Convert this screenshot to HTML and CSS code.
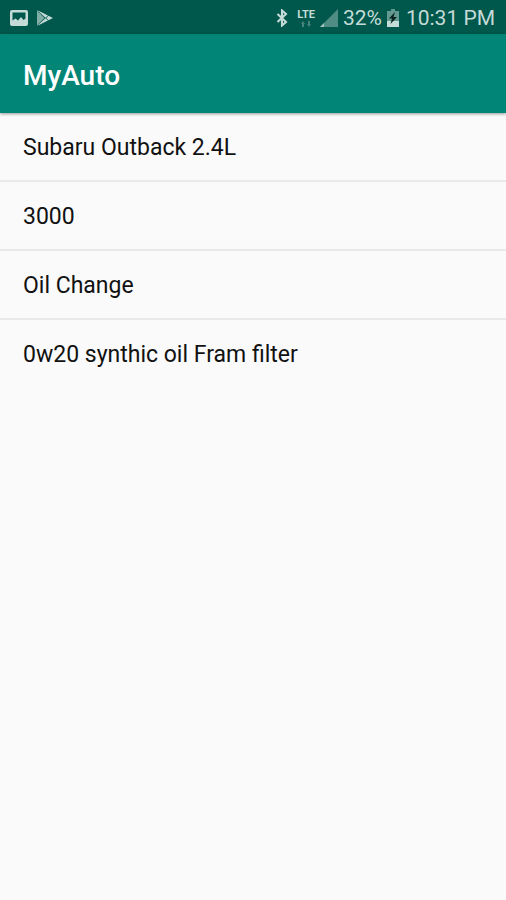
FILE: index.html
```html
<!DOCTYPE html>
<html lang="en">
<head>
<meta charset="utf-8">
<meta name="viewport" content="width=device-width, initial-scale=1">
<title>MyAuto</title>
<link rel="stylesheet" href="styles.css">
</head>
<body>
<div class="status">
  <div class="notifications">
    <svg width="18" height="16" viewBox="0 0 18 16" aria-hidden="true"><path fill="currentColor" fill-rule="evenodd" d="M2 0h14q2 0 2 2v12q0 2-2 2H2q-2 0-2-2V2q0-2 2-2zM2.500 2.500v8l3-2 2.500 2 3-3.500 2.500 3 2-1.500v-6z"/></svg>
    <svg width="16" height="16" viewBox="0 0 16 16" aria-hidden="true"><path fill="currentColor" d="M0 .5v15L7.500 8z" opacity=".65"/><path fill="currentColor" d="M0 0l11 5.500-2.500 2.200zM0 16l11-5.500-2.500-2.200zM11.500 5.800L16 8l-4.500 2.200L9.300 8z"/></svg>
  </div>
  <div class="indicators">
    <svg width="12" height="18" viewBox="0 0 12 18" aria-hidden="true"><path fill="none" stroke="currentColor" stroke-width="2.100" d="M1.500 5l8.500 8-4 3.500v-15L10 5l-8.500 8"/></svg>
    <div class="network">
      <span class="lte">LTE</span>
      <svg width="10" height="6" viewBox="0 0 10 6" aria-hidden="true"><path fill="currentColor" opacity=".35" d="M0 3l2-3 2 3H3v3H1V3zM7 0h2v3h1L8 6 6 3h1z"/></svg>
    </div>
    <svg width="18" height="18" viewBox="0 0 18 18" aria-hidden="true"><path fill="currentColor" opacity=".4" d="M18 0v18H0z"/><path fill="currentColor" opacity=".7" d="M4 14v4H0z"/></svg>
    <span>32%</span>
    <svg width="12" height="18" viewBox="0 0 12 18" aria-hidden="true"><path fill="currentColor" opacity=".5" d="M4 0h4v2h4v16H0V2h4z"/><path fill="currentColor" d="M0 12h12v6H0z"/><path fill="#06231f" d="M8 3L2 9.500h3L3.500 15 10 8H6.500z"/></svg>
    <time class="clock">10:31 PM</time>
  </div>
</div>
<header class="appbar"><h1>MyAuto</h1></header>
<main>
  <ul class="list">
    <li>Subaru Outback 2.4L</li>
    <li>3000</li>
    <li>Oil Change</li>
    <li>0w20 synthic oil Fram filter</li>
  </ul>
</main>
</body>
</html>
```
FILE: styles.css
```css
* { box-sizing: border-box; }

body {
  margin: 0;
  min-height: 100vh;
  background: #fafafa;
  color: #111;
  font-family: Roboto, "Liberation Sans", sans-serif;
}

svg { display: block; flex: none; }

.status {
  display: flex;
  justify-content: space-between;
  align-items: center;
  height: 34px;
  padding: 2px 11px 0 10px;
  background: #00574b;
  color: #c5dbd7;
}

.notifications {
  display: flex;
  align-items: center;
  gap: 9px;
}

.indicators {
  display: flex;
  align-items: center;
  gap: 5px;
  font-size: 21px;
  line-height: 32px;
  white-space: nowrap;
}

.network {
  display: flex;
  flex-direction: column;
  align-items: center;
  gap: 1px;
  margin-left: 4px;
}

.lte {
  font-size: 11px;
  line-height: 11px;
  font-weight: 700;
}

.clock { margin-left: 2px; }

.appbar {
  position: relative;
  display: flex;
  align-items: center;
  height: 79px;
  padding: 4px 23px 0;
  background: #008577;
  color: #fff;
  box-shadow: 0 1px 3px rgba(0, 0, 0, 0.4);
}

.appbar h1 {
  margin: 0;
  font-size: 28px;
  line-height: 36px;
  font-weight: 500;
}

.list {
  margin: 0;
  padding: 0;
  list-style: none;
}

.list li {
  padding: 2px 23px 0;
  font-size: 23px;
  line-height: 65px;
  border-bottom: 2px solid #e9e9e9;
}

.list li:last-child { border-bottom: 0; }
```
